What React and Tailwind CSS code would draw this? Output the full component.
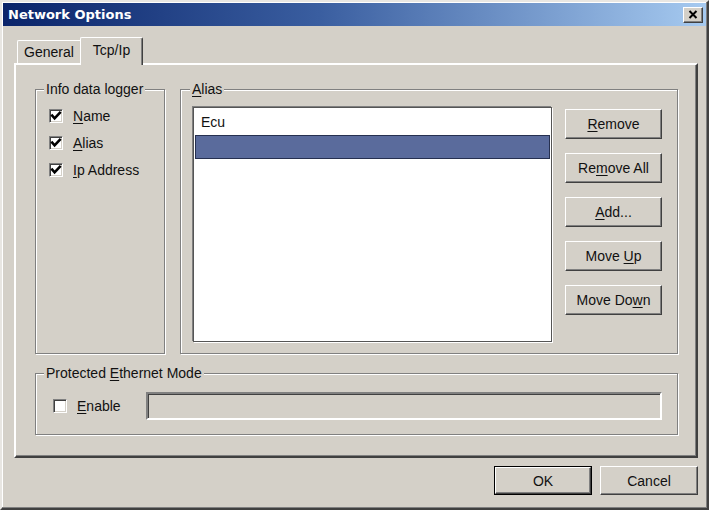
import React from "react";

const FONT = { fontFamily: '"Liberation Sans", Arial, sans-serif' };

function Check({ checked }) {
  return (
    <span className="w-[14px] h-[14px] flex-none bg-white border-t border-l border-t-[#808080] border-l-[#808080] border-r border-b border-r-white border-b-white shadow-[inset_1px_1px_0_#404040,inset_-1px_-1px_0_#d4d0c8] flex items-center justify-center">
      {checked && (
        <svg width="12" height="12" viewBox="0 0 12 12">
          <polyline points="2.2,5.6 4.6,8.4 9.8,2.8" fill="none" stroke="#000" strokeWidth="2.6" strokeLinecap="square" />
        </svg>
      )}
    </span>
  );
}

function Btn({ children, className = "", def = false }) {
  const inner = (
    <div className="w-full h-full flex items-center justify-center border border-t-white border-l-white border-r-[#404040] border-b-[#404040] shadow-[inset_-1px_-1px_0_#808080] text-[14px] text-[#111] leading-none">
      {children}
    </div>
  );
  if (def) {
    return <div className={`border border-black ${className}`}>{inner}</div>;
  }
  return <div className={className}>{inner}</div>;
}

function Group({ label, className = "", children, legendClass = "ml-[8px]" }) {
  return (
    <fieldset className={`border border-[#808080] shadow-[inset_1px_1px_0_#fff,1px_1px_0_#fff] m-0 p-0 min-w-0 ${className}`}>
      <legend className={`${legendClass} px-[2px] text-[14px] leading-[16px] text-[#111] bg-[#d4d0c8]`}>{label}</legend>
      {children}
    </fieldset>
  );
}

export default function App() {
  return (
    <div style={FONT} className="w-[709px] h-[510px] bg-[#d4d0c8] border-2 border-t-[#e8e6e2] border-l-[#e8e6e2] border-r-[#404040] border-b-[#404040] shadow-[inset_-1px_-1px_0_#808080,inset_1px_1px_0_#fff] p-[1px] overflow-hidden select-none">
      {/* Title bar */}
      <div className="h-[23px] flex items-center justify-between bg-[linear-gradient(to_right,#0a246a,#3a5ea0_45%,#a6caf0)] pl-[5px] pr-[3px]">
        <span style={{ fontFamily: '"DejaVu Sans", Verdana, sans-serif' }} className="text-white font-bold text-[13px] leading-none">Network Options</span>
        <div className="w-[20px] h-[16px] bg-[#d4d0c8] border border-t-white border-l-white border-r-[#404040] border-b-[#404040] shadow-[inset_-1px_-1px_0_#808080] flex items-center justify-center">
          <svg width="10" height="9" viewBox="0 0 10 9">
            <path d="M1.5 1 L8.5 8 M8.5 1 L1.5 8" stroke="#000" strokeWidth="2" />
          </svg>
        </div>
      </div>

      {/* Tabs */}
      <div className="mt-[11px] ml-[14px] h-[26px] flex items-end">
        <div className="w-[63px] h-[23px] border-t border-l border-t-white border-l-white rounded-tl-[2px] flex items-center justify-center text-[14px] text-[#111] leading-none">
          General
        </div>
        <div className="relative z-10 -mb-[2px] w-[63px] h-[28px] bg-[#d4d0c8] border-t border-l border-r border-t-white border-l-white border-r-[#404040] shadow-[inset_-1px_0_0_#808080] rounded-t-[2px] flex items-start justify-center pt-[4px] text-[14px] text-[#111] leading-[16px]">
          Tcp/Ip
        </div>
      </div>

      {/* Panel */}
      <div className="ml-[11px] w-[684px] h-[395px] border-2 border-t-white border-l-white border-r-[#404040] border-b-[#404040] shadow-[inset_-1px_-1px_0_#808080] pt-[16px] pl-[19px]">
        <div className="flex">
          <Group label="Info data logger" className="w-[130px] h-[273px]">
            <div className="pt-[9px] pl-[13px] flex flex-col gap-[7px]">
              <div className="h-[20px] flex items-center gap-[10px] text-[14px] text-[#111]">
                <Check checked />
                <span><u className="underline-offset-2">N</u>ame</span>
              </div>
              <div className="h-[20px] flex items-center gap-[10px] text-[14px] text-[#111]">
                <Check checked />
                <span><u className="underline-offset-2">A</u>lias</span>
              </div>
              <div className="h-[20px] flex items-center gap-[10px] text-[14px] text-[#111]">
                <Check checked />
                <span><u className="underline-offset-2">I</u>p Address</span>
              </div>
            </div>
          </Group>
          <Group
            label={<><u className="underline-offset-2">A</u>lias</>}
            legendClass="ml-[9px]"
            className="ml-[15px] w-[498px] h-[273px]"
          >
            <div className="pt-[10px] pl-[12px] flex">
              <div className="w-[359px] h-[235px] bg-white border border-[#555] shadow-[-1px_-1px_0_#808080,1px_1px_0_#fff] p-[1px] flex flex-col">
                <div className="h-[26px] flex items-center pl-[6px] text-[14px] text-[#111]">Ecu</div>
                <div className="h-[24px] bg-[#5a6b9c] border border-[#263050]"></div>
              </div>
              <div className="ml-[13px] mt-[2px] flex flex-col gap-[14px]">
                <Btn className="w-[97px] h-[30px]"><span><u className="underline-offset-2">R</u>emove</span></Btn>
                <Btn className="w-[97px] h-[30px]"><span>Re<u className="underline-offset-2">m</u>ove All</span></Btn>
                <Btn className="w-[97px] h-[30px]"><span><u className="underline-offset-2">A</u>dd...</span></Btn>
                <Btn className="w-[97px] h-[30px]"><span>Move <u className="underline-offset-2">U</u>p</span></Btn>
                <Btn className="w-[97px] h-[30px]"><span>Move Do<u className="underline-offset-2">w</u>n</span></Btn>
              </div>
            </div>
          </Group>
        </div>
        <Group
          label={<>Protected <u className="underline-offset-2">E</u>thernet Mode</>}
          className="mt-[11px] w-[643px] h-[70px]"
        >
          <div className="pt-[11px] pl-[17px] flex items-center">
            <div className="w-[93px] flex items-center gap-[10px] text-[14px] text-[#111]">
              <Check />
              <span><u className="underline-offset-2">E</u>nable</span>
            </div>
            <div className="w-[516px] h-[28px] bg-[#d4d0c8] border-2 border-t-[#808080] border-l-[#808080] border-r-white border-b-white shadow-[inset_1px_1px_0_#404040]"></div>
          </div>
        </Group>
      </div>

      {/* Bottom buttons */}
      <div className="ml-[11px] w-[684px] mt-[8px] flex justify-end gap-[8px]">
        <Btn def className="w-[98px] h-[29px]">OK</Btn>
        <Btn className="w-[98px] h-[29px]">Cancel</Btn>
      </div>
    </div>
  );
}
